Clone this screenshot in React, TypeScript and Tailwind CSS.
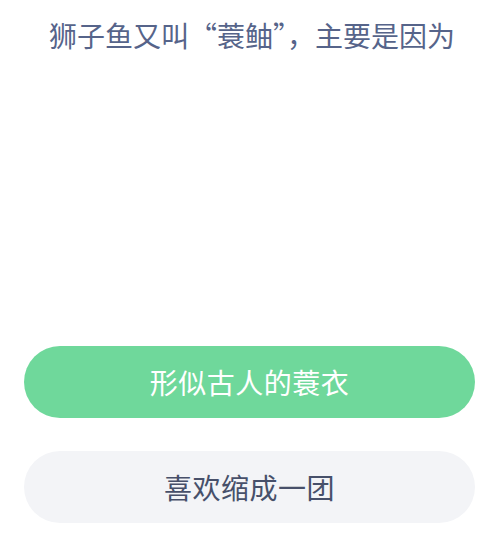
export default function App() {
  const font = { fontFamily: '"Noto Sans CJK SC", "Noto Sans", sans-serif' }
  return (
    <div className="w-[504px] h-[551px] bg-white flex flex-col overflow-hidden" style={font}>
      <h1 className="mt-[14px] text-center text-[28px] leading-[42px] text-[#56648a] font-normal">
        狮子鱼又叫“蓑鲉”，主要是因为
      </h1>
      <div className="mt-[290px] pl-6 flex flex-col gap-[33px]">
        <button className="h-[72px] w-[451px] rounded-full bg-[#6fd89b] text-white text-[28px] tracking-[0.5px]">
          形似古人的蓑衣
        </button>
        <button className="h-[72px] w-[451px] rounded-full bg-[#f3f4f7] text-[#47506a] text-[28px] tracking-[0.5px]">
          喜欢缩成一团
        </button>
      </div>
    </div>
  )
}
